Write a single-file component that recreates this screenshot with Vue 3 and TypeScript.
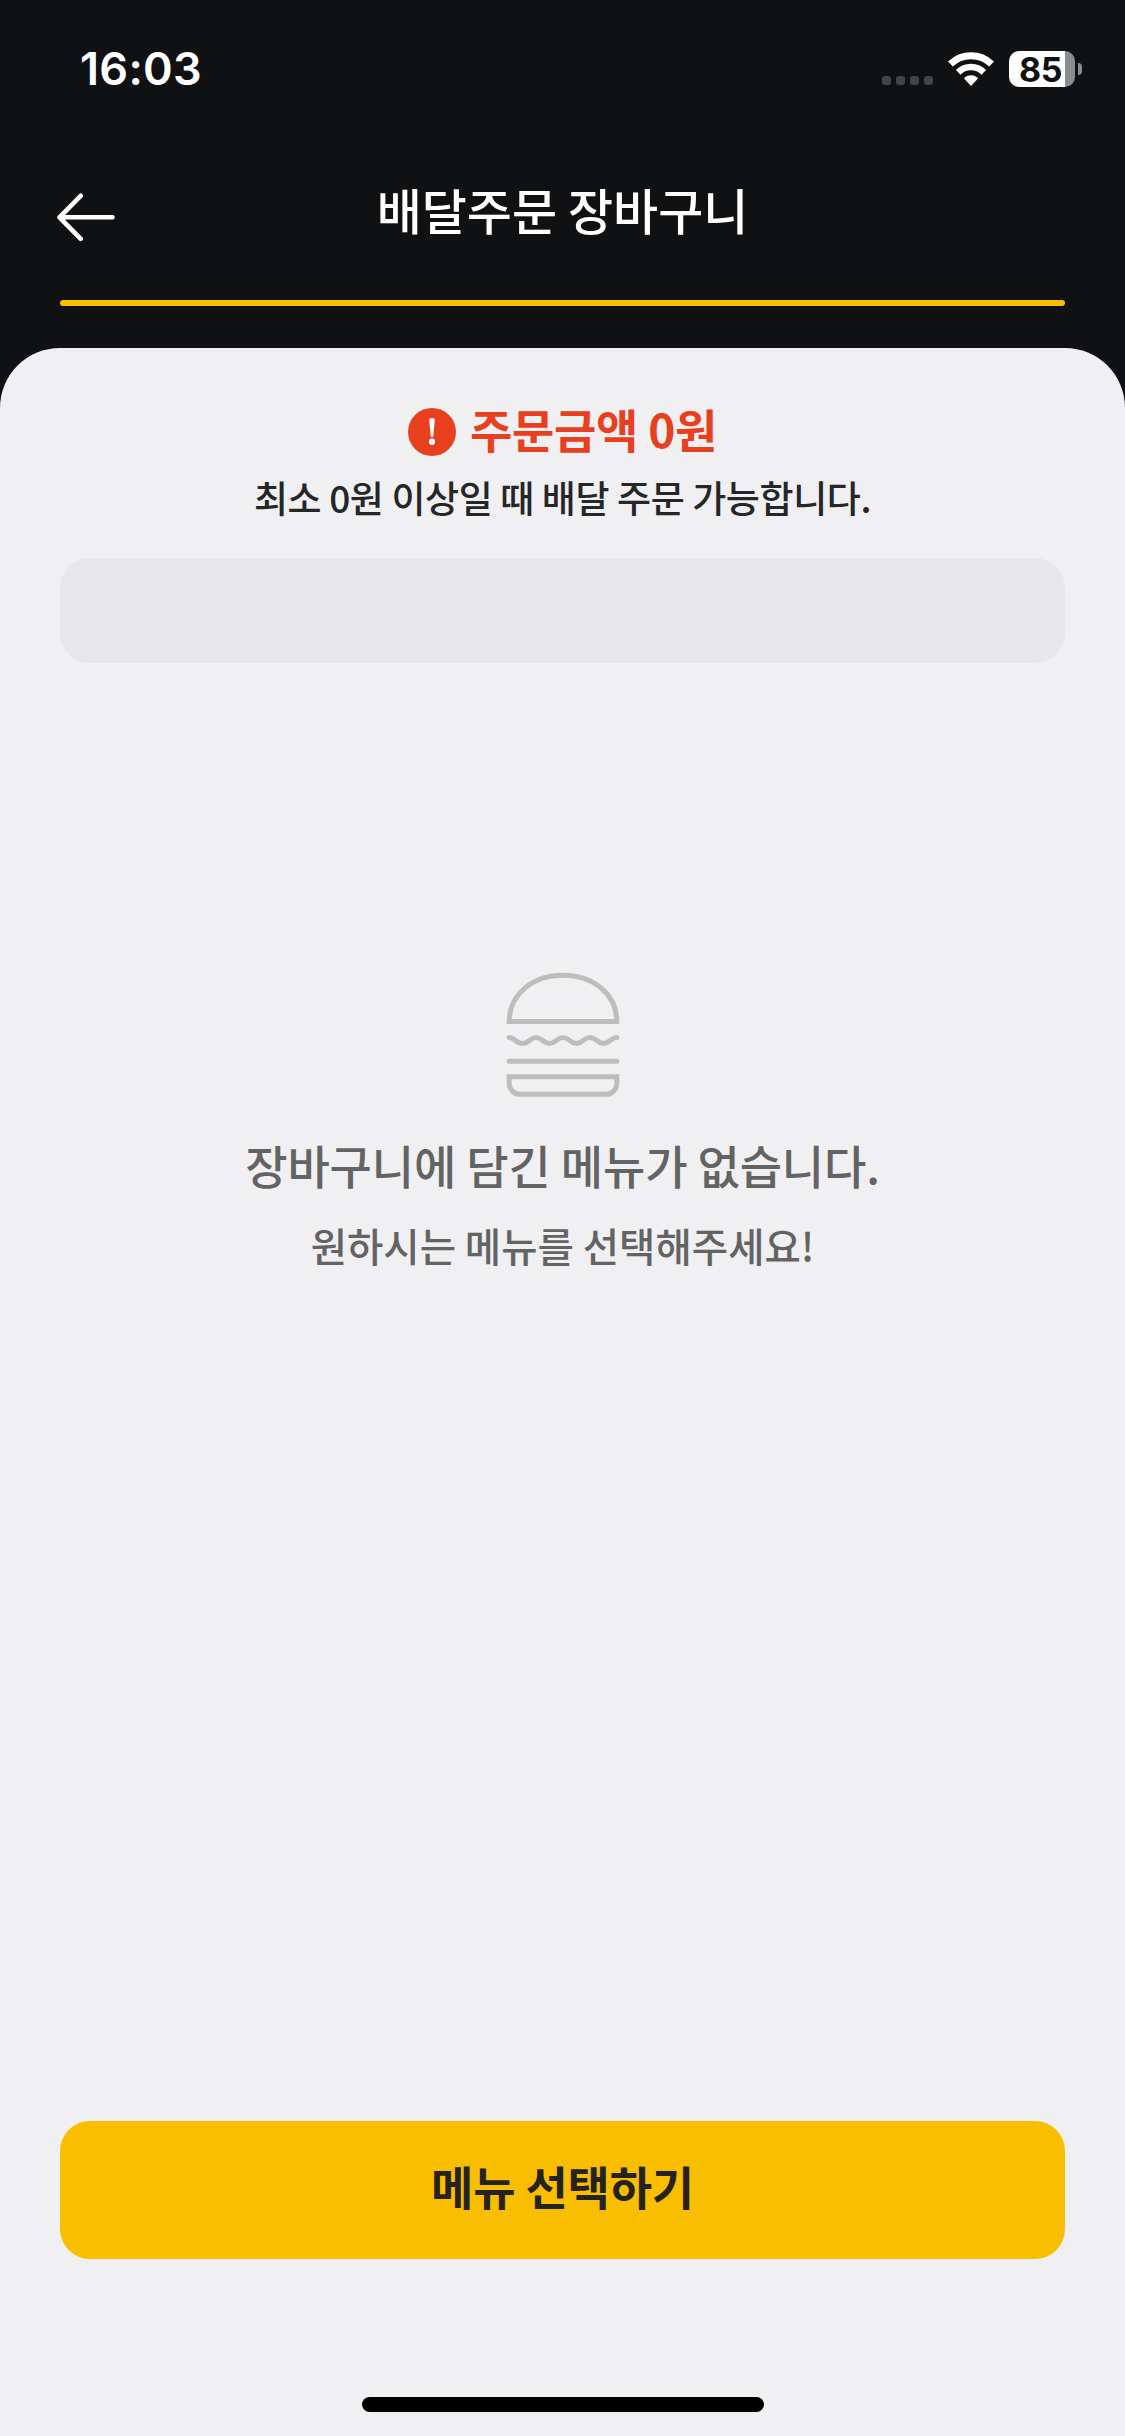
<script setup lang="ts">
const time: string = '16:03'
const batteryLevel: number = 85
const orderAmount: number = 0
const minimumAmount: number = 0
</script>

<template>
  <div class="screen">
    <header class="status-bar">
      <span class="time">{{ time }}</span>
      <div class="status-icons">
        <div class="signal"><i v-for="n in 4" :key="n"></i></div>
        <svg class="wifi" width="46" height="34" viewBox="0 0 46 34">
          <g fill="none" stroke="#fff">
            <path d="M2.4 12.1a29.6 29.6 0 0 1 41.2 0" stroke-width="7" />
            <path d="M10.2 20.3a18.2 18.2 0 0 1 25.6 0" stroke-width="6.6" />
          </g>
          <path d="M23 34l-6.5-6.9a1 1 0 0 1 .1-1.5a10.300 10.300 0 0 1 12.800 0a1 1 0 0 1 .1 1.500z" fill="#fff" />
        </svg>
        <div class="battery">
          <div class="battery-body"><span>{{ batteryLevel }}</span></div>
          <div class="battery-cap"></div>
        </div>
      </div>
    </header>

    <nav class="nav">
      <button class="back" aria-label="뒤로">
        <svg width="60" height="50" viewBox="0 0 60 50" fill="none" stroke="#fff" stroke-width="4.6" stroke-linecap="round" stroke-linejoin="round">
          <path d="M25.700 3.800L4.500 25.300L25.700 46.800M4.500 25.300H57.500" />
        </svg>
      </button>
      <h1><span>배달주문 장바구니</span></h1>
    </nav>
    <div class="progress"></div>

    <main class="sheet">
      <section class="notice">
        <div class="amount">
          <svg width="48" height="48" viewBox="0 0 48 48">
            <circle cx="24" cy="24" r="24" fill="#e83f1f" />
            <path d="M21.200 11.500Q21.200 10 24 10Q26.800 10 26.800 11.500L25.300 28.300Q25 29.200 24 29.200Q23 29.200 22.700 28.300Z" fill="#fff" />
            <circle cx="24" cy="33.700" r="3.100" fill="#fff" />
          </svg>
          <strong>주문금액 {{ orderAmount }}원</strong>
        </div>
        <p class="minimum"><span>최소 {{ minimumAmount }}원 이상일 때 배달 주문 가능합니다.</span></p>
        <div class="gauge"></div>
      </section>

      <section class="empty">
        <svg width="114" height="126" viewBox="0 0 114 126" fill="none" stroke="#bdbdbd" stroke-width="5" stroke-linecap="round" stroke-linejoin="round">
          <path d="M3.200 49.600C3.200 22 27 3.300 57 3.300S110.800 22 110.800 49.600Z" stroke-linejoin="miter" />
          <path d="M3.200 65.500C9.500 65.500 9.500 71.500 16.600 71.500S23.500 65.500 30 65.500S37 71.500 43.600 71.500S50.500 65.500 57 65.500S63.700 71.500 70.400 71.500S77.500 65.500 84 65.500S90.800 71.500 97.500 71.500S104.500 65.500 110.800 65.500" />
          <path d="M3.200 89.300H110.800" />
          <path d="M3.200 104.700H110.800V111.500A10.800 10.800 0 0 1 100 122.300H14A10.800 10.800 0 0 1 3.200 111.500Z" stroke-linejoin="miter" />
        </svg>
        <p class="empty-title"><span>장바구니에 담긴 메뉴가 없습니다.</span></p>
        <p class="empty-text"><span>원하시는 메뉴를 선택해주세요!</span></p>
      </section>

      <button class="choose"><span>메뉴 선택하기</span></button>
      <div class="home-indicator"></div>
    </main>
  </div>
</template>

<style>
body {
  margin: 0;
  background: #101113;
}
</style>

<style scoped>
.screen {
  width: 1125px;
  height: 2436px;
  display: flex;
  flex-direction: column;
  overflow: hidden;
  background: #101113;
  font-family: 'Noto Sans CJK KR', sans-serif;
  white-space: nowrap;
}
.screen * {
  box-sizing: border-box;
}
h1,
p {
  margin: 0;
}
button {
  border: 0;
  padding: 0;
  font-family: inherit;
}
.status-bar {
  height: 138px;
  flex: none;
  display: flex;
  justify-content: space-between;
  align-items: center;
  padding: 0 43px 0 80px;
}
.time {
  font: 600 45px/60px Inter, sans-serif;
  letter-spacing: 0.3px;
  color: #fff;
}
.status-icons {
  display: flex;
  align-items: center;
}
.signal {
  display: flex;
  gap: 5px;
  margin: 23px 15px 0 0;
}
.signal i {
  width: 9px;
  height: 9px;
  border-radius: 3px;
  background: #434446;
}
.wifi {
  margin-right: 15px;
}
.battery {
  display: flex;
  align-items: center;
  gap: 3px;
}
.battery-body {
  width: 66px;
  height: 36px;
  padding-right: 3px;
  border-radius: 10px;
  background: linear-gradient(90deg, #fff 56px, #8b8c8d 56px);
  text-align: center;
  font: 700 34px/37px Inter, sans-serif;
  letter-spacing: -0.5px;
  color: #101113;
}
.battery-cap {
  width: 4px;
  height: 12px;
  border-radius: 0 5px 5px 0;
  background: #8b8c8d;
}
.nav {
  height: 162px;
  flex: none;
  display: grid;
  grid-template-columns: 160px 1fr 160px;
  align-items: start;
}
.back {
  margin: 54px 0 0 55px;
  width: 60px;
  height: 50px;
  background: none;
}
.back svg {
  display: block;
}
h1 {
  margin-top: 36px;
  text-align: center;
  font-size: 49px;
  line-height: 70px;
  font-weight: 500;
  color: #fff;
}
.progress {
  flex: none;
  height: 6px;
  margin: 0 60px 42px;
  border-radius: 3px;
  background: #fabe00;
}
.sheet {
  flex: 1;
  display: flex;
  flex-direction: column;
  padding: 0 60px;
  border-radius: 60px 60px 0 0;
  background: #f0f0f2;
}
.notice {
  padding-top: 50px;
  text-align: center;
}
.amount {
  height: 68px;
  display: flex;
  justify-content: center;
  align-items: center;
  gap: 14px;
}
.amount strong {
  margin-bottom: 8px;
  font-size: 46px;
  line-height: 60px;
  font-weight: 700;
  letter-spacing: -0.3px;
  color: #e83f1f;
}
.minimum {
  height: 92px;
  font-size: 37px;
  line-height: 62px;
  font-weight: 500;
  letter-spacing: -0.4px;
  color: #242628;
}
.gauge {
  height: 105px;
  border-radius: 30px;
  background: #e7e6eb;
}
.empty {
  flex: 1;
  padding-top: 309px;
  text-align: center;
  color: #636363;
  font-weight: 500;
}
.empty svg {
  display: block;
  margin: 0 auto;
}
.empty-title {
  margin-top: 31px;
  font-size: 46px;
  line-height: 70px;
  letter-spacing: -0.15px;
}
.empty-text {
  margin-top: 14px;
  font-size: 39.5px;
  line-height: 64px;
}
.choose {
  height: 138px;
  flex: none;
  padding-bottom: 10px;
  border-radius: 30px;
  background: #fabe00;
  font-size: 46px;
  line-height: 70px;
  font-weight: 700;
  letter-spacing: -0.2px;
  color: #25231c;
}
.home-indicator {
  width: 402px;
  height: 15px;
  margin: 138px auto 24px;
  flex: none;
  border-radius: 8px;
  background: #000;
}
</style>
